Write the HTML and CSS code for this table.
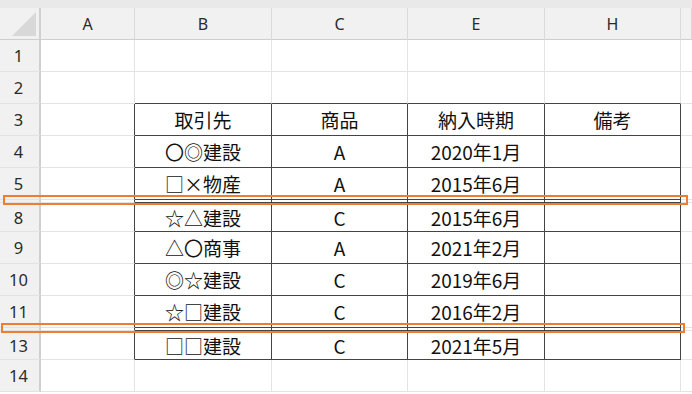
FILE: index.html
```html
<!DOCTYPE html>
<html lang="ja">
<head>
<meta charset="utf-8">
<title>Sheet</title>
<link rel="stylesheet" href="styles.css">
</head>
<body>
<div class="sheet">
  <div class="strip"></div>
  <div class="row head">
    <div class="corner"><span class="tri"></span></div>
    <div class="ch">A</div>
    <div class="ch">B</div>
    <div class="ch">C</div>
    <div class="ch">E</div>
    <div class="ch">H</div>
    <div class="ch rest"></div>
  </div>

  <div class="row">
    <div class="rn">1</div><div class="c"></div><div class="c"></div><div class="c"></div><div class="c"></div><div class="c"></div><div class="c rest"></div>
  </div>
  <div class="row top-edge">
    <div class="rn">2</div><div class="c"></div><div class="c t"></div><div class="c t"></div><div class="c t"></div><div class="c t"></div><div class="c rest"></div>
  </div>
  <div class="row tbl">
    <div class="rn">3</div><div class="c l"></div><div class="c t">取引先</div><div class="c t">商品</div><div class="c t">納入時期</div><div class="c t">備考</div><div class="c rest"></div>
  </div>
  <div class="row tbl">
    <div class="rn">4</div><div class="c l"></div><div class="c t">〇◎建設</div><div class="c t">A</div><div class="c t">2020年1月</div><div class="c t"></div><div class="c rest"></div>
  </div>
  <div class="row tbl">
    <div class="rn">5</div><div class="c l"></div><div class="c t">□×物産</div><div class="c t">A</div><div class="c t">2015年6月</div><div class="c t"></div><div class="c rest"></div>
  </div>
  <div class="row tbl hidden">
    <div class="rn"></div><div class="c l"></div><div class="c t"></div><div class="c t"></div><div class="c t"></div><div class="c t"></div><div class="c rest"></div>
  </div>
  <div class="row tbl after">
    <div class="rn">8</div><div class="c l"></div><div class="c t">☆△建設</div><div class="c t">C</div><div class="c t">2015年6月</div><div class="c t"></div><div class="c rest"></div>
  </div>
  <div class="row tbl">
    <div class="rn">9</div><div class="c l"></div><div class="c t">△〇商事</div><div class="c t">A</div><div class="c t">2021年2月</div><div class="c t"></div><div class="c rest"></div>
  </div>
  <div class="row tbl">
    <div class="rn">10</div><div class="c l"></div><div class="c t">◎☆建設</div><div class="c t">C</div><div class="c t">2019年6月</div><div class="c t"></div><div class="c rest"></div>
  </div>
  <div class="row tbl">
    <div class="rn">11</div><div class="c l"></div><div class="c t">☆□建設</div><div class="c t">C</div><div class="c t">2016年2月</div><div class="c t"></div><div class="c rest"></div>
  </div>
  <div class="row tbl hidden">
    <div class="rn"></div><div class="c l"></div><div class="c t"></div><div class="c t"></div><div class="c t"></div><div class="c t"></div><div class="c rest"></div>
  </div>
  <div class="row tbl after">
    <div class="rn">13</div><div class="c l"></div><div class="c t">□□建設</div><div class="c t">C</div><div class="c t">2021年5月</div><div class="c t"></div><div class="c rest"></div>
  </div>
  <div class="row">
    <div class="rn">14</div><div class="c"></div><div class="c"></div><div class="c"></div><div class="c"></div><div class="c"></div><div class="c rest"></div>
  </div>

  <div class="mark mark-1"></div>
  <div class="mark mark-2"></div>
</div>
</body>
</html>
```

FILE: styles.css
```css
* { box-sizing: border-box; }
html, body { margin: 0; padding: 0; background: #ffffff; }
body {
  width: 692px;
  height: 394px;
  overflow: hidden;
  font-family: "Noto Sans CJK JP", "Noto Sans", sans-serif;
}
.sheet {
  position: relative;
  width: 692px;
}
.strip {
  height: 8px;
  background: #e9e9e9;
}
.row {
  display: grid;
  grid-template-columns: 41px 94px 137px 136px 137px 136px 11px;
  height: 32px;
}
.row.hidden { height: 3px; }
.row.after { height: 29px; }

.head .ch, .corner {
  background: #f1f1f1;
  border-bottom: 1px solid #cfcfcf;
  border-right: 1px solid #dadada;
  display: flex;
  align-items: center;
  justify-content: center;
  font-family: "Noto Sans", "Open Sans", sans-serif;
  font-size: 16px;
  color: #2b2b2b;
}
.corner {
  position: relative;
  border-right: 2px solid #d0d0d0;
}
.tri {
  position: absolute;
  right: 3px;
  bottom: 3px;
  width: 0;
  height: 0;
  border-left: 24px solid transparent;
  border-bottom: 24px solid #d8d8d8;
}
.rn {
  background: #f1f1f1;
  border-right: 2px solid #d0d0d0;
  border-bottom: 1px solid #e2e2e2;
  display: flex;
  align-items: center;
  justify-content: center;
  font-family: "Noto Sans", "Open Sans", sans-serif;
  font-size: 16.5px;
  color: #2b2b2b;
  padding-right: 2px;
}
.c {
  border-right: 1px solid #e3e3e3;
  border-bottom: 1px solid #e3e3e3;
  display: flex;
  align-items: center;
  justify-content: center;
  font-size: 19px;
  color: #111111;
  white-space: nowrap;
  overflow: hidden;
}
.c.rest { border-right: none; }
.top-edge .c.t { border-bottom: 1px solid #444444; }
.tbl .c.l { border-right: 1px solid #444444; }
.tbl .c.t {
  border-right: 1px solid #444444;
  border-bottom: 1px solid #444444;
}
.mark {
  position: absolute;
  border: 2.5px solid #ed7d31;
  pointer-events: none;
}
.mark-1 { left: 3px; top: 195px; width: 685px; height: 10px; }
.mark-2 { left: 1px; top: 323px; width: 684px; height: 10px; }
```
